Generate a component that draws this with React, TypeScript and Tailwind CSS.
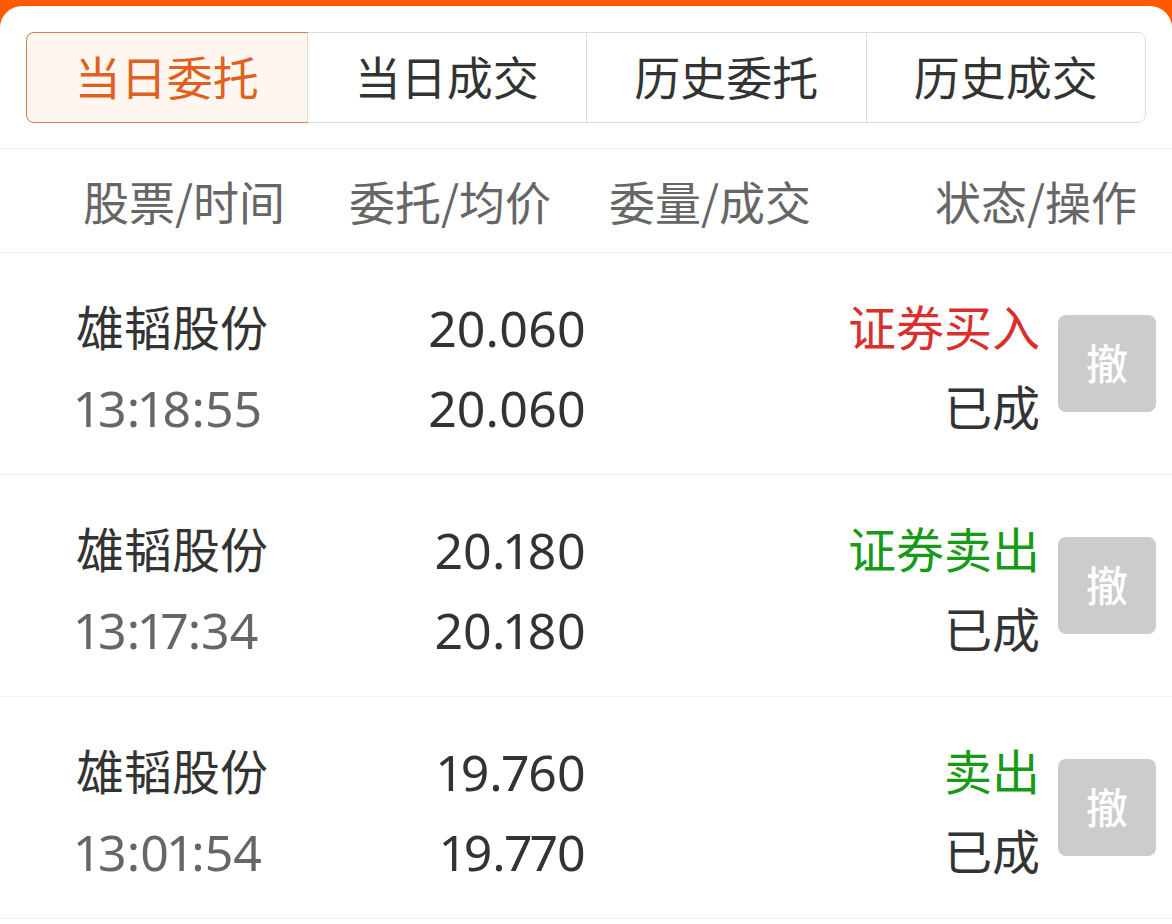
const tabs = ["当日委托", "当日成交", "历史委托", "历史成交"];

const orders = [
  { name: "雄韬股份", time: "13:18:55", price: "20.060", avg: "20.060", side: "证券买入", sideColor: "text-[#d8302c]", status: "已成" },
  { name: "雄韬股份", time: "13:17:34", price: "20.180", avg: "20.180", side: "证券卖出", sideColor: "text-[#179a17]", status: "已成" },
  { name: "雄韬股份", time: "13:01:54", price: "19.760", avg: "19.770", side: "卖出", sideColor: "text-[#179a17]", status: "已成" },
];

export default function App() {
  return (
    <div
      className="w-[1172px] h-[924px] bg-[#ff5a00] pt-[6px] overflow-hidden"
      style={{ fontFamily: '"Noto Sans", "Noto Sans CJK SC", sans-serif' }}
    >
      <div className="h-full bg-white rounded-t-[22px]">
        {/* tabs */}
        <div className="px-[26px] pt-[26px]">
          <div className="grid grid-cols-4 h-[91px] rounded-[8px] border border-[#dcdcdc]">
            {tabs.map((t, i) => (
              <div
                key={t}
                className={
                  i === 0
                    ? "flex items-center justify-center -m-px rounded-[8px] rounded-r-none border border-[#d4804f] bg-[#fff6f0] text-[46px] text-[#e0611f]"
                    : "flex items-center justify-center border-l border-[#dcdcdc] text-[46px] text-[#333333] first:border-l-0"
                }
              >
                {t}
              </div>
            ))}
          </div>
        </div>

        {/* header */}
        <div
          className="mt-[25px] flex items-center h-[105px] border-t border-b border-[#efefef] text-[46px] text-[#666666]"
          style={{ fontFamily: '"Noto Sans CJK SC", sans-serif' }}
        >
          <div className="pl-[83px] w-[349px]">股票/时间</div>
          <div className="w-[260px]">委托/均价</div>
          <div className="flex-1">委量/成交</div>
          <div className="pr-[35px]">状态/操作</div>
        </div>

        {/* rows */}
        {orders.map((o, i) => (
          <div key={i} className="flex items-center h-[222px] border-b border-[#efefef] pl-[76px] pr-[16px]">
            <div className="w-[300px] flex flex-col pt-[8px] leading-[80px]">
              <span className="text-[48px] text-[#333333]">{o.name}</span>
              <span className="text-[50px] text-[#666666] proportional-nums">{o.time}</span>
            </div>
            <div className="w-[210px] flex flex-col items-end pt-[8px] leading-[80px] text-[50px] text-[#333333] proportional-nums">
              <span>{o.price}</span>
              <span>{o.avg}</span>
            </div>
            <div className="flex-1" />
            <div className="flex flex-col items-end pt-[8px] leading-[80px] text-[48px]">
              <span className={o.sideColor}>{o.side}</span>
              <span className="text-[#333333]">{o.status}</span>
            </div>
            <button className="ml-[18px] w-[98px] h-[97px] rounded-[8px] bg-[#cccccc] text-white text-[42px] font-medium flex items-center justify-center">
              撤
            </button>
          </div>
        ))}
      </div>
    </div>
  );
}
